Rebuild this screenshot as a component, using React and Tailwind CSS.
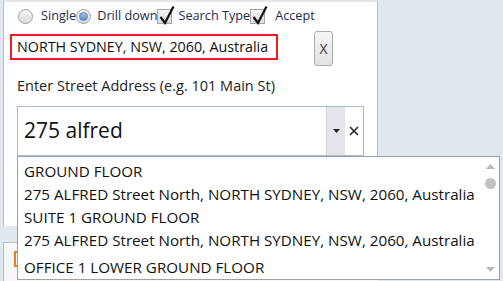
import React from "react";

const font = { fontFamily: '"Open Sans", "Noto Sans", sans-serif' };

function Radio({ checked }) {
  return (
    <span className="w-[15px] h-[15px] rounded-full border border-[#9aa0a8] bg-gradient-to-b from-[#f4f4f4] to-[#dcdcdc] flex items-center justify-center shrink-0">
      {checked && <span className="w-[9px] h-[9px] rounded-full bg-gradient-to-b from-[#a9c4ec] to-[#5d87c9] border border-[#5a7fbf]" />}
    </span>
  );
}

function Check() {
  return (
    <span className="relative w-[15px] h-[15px] border border-[#a6a6a6] bg-gradient-to-b from-[#f2f2f2] to-[#dedede] shrink-0">
      <svg className="absolute left-[1px] top-[-5px]" width="16" height="20" viewBox="0 0 16 20">
        <path d="M1.5 12 L6 18 L14.5 1.5" fill="none" stroke="#111" strokeWidth="2.2" />
      </svg>
    </span>
  );
}

export default function App() {
  return (
    <div className="w-[503px] h-[281px] relative overflow-hidden bg-[#e0e7ef] flex text-[#111]" style={font}>
      <div className="w-[378px] shrink-0 pl-[3px] flex flex-col">
        <div className="h-[226px] bg-white border-l border-r border-[#b9bec6] border-t-2 border-t-[#e3e6ea] relative">
          {/* options row */}
          <div className="flex items-center h-[28px] pl-[14px] text-[12.7px] text-[#1e2b50]">
            <Radio />
            <span className="ml-[8px]">Single</span>
            <Radio checked />
            <span className="ml-[6px]">Drill down</span>
            <Check />
            <span className="ml-[6px]">Search Type</span>
            <Check />
            <span className="ml-[10px]">Accept</span>
          </div>
          <div className="flex items-start mt-[1px]">
            <div className="ml-[6px] mt-[3px] w-[268px] h-[26px] border-2 border-[#ec1c24] flex items-center pl-[5px] text-[14.3px] whitespace-nowrap overflow-hidden">
              NORTH SYDNEY, NSW, 2060, Australia
            </div>
            <button className="ml-[36px] w-[19px] h-[35px] rounded-[3px] border border-[#a9adb3] bg-gradient-to-b from-[#f5f5f5] to-[#e2e2e2] text-[14px] text-[#333] flex items-center justify-center">
              X
            </button>
          </div>
          <div className="pl-[13px] mt-[11px] text-[14.5px] leading-[18px] text-[#222]">
            Enter Street Address (e.g. 101 Main St)
          </div>
          <div className="ml-[13px] mt-[11px] w-[347px] h-[50px] border border-[#a9b9da] flex">
            <div className="flex-1 flex items-center pl-[6px] text-[21px] text-[#111]">275 alfred</div>
            <div className="w-[19px] bg-[#e4e5e9] border-l border-[#d0d2d8] flex items-center justify-center">
              <svg width="7" height="4" viewBox="0 0 7 4"><path d="M0 0 H7 L3.5 4 Z" fill="#222" /></svg>
            </div>
            <div className="w-[18px] flex items-center justify-center">
              <svg width="10" height="10" viewBox="0 0 10 10"><path d="M1 1 L9 9 M9 1 L1 9" stroke="#222" strokeWidth="1.6" /></svg>
            </div>
          </div>
        </div>
        <div className="mt-[16px] flex-1 bg-[#f7f7f7] border-l border-t border-[#b9bec6] pl-[10px] pt-[8px]">
          <div className="w-[6px] h-[16px] border-l-2 border-y-2 border-[#d9822b]" />
        </div>
      </div>

      {/* autocomplete popup */}
      <div className="absolute left-[17px] top-[156px] w-[483px] h-[124px] bg-white border border-[#a0a0a0] flex text-[15.2px] text-[#111]">
        <div className="flex-1 pl-[6px] pt-[3px] leading-[23px] whitespace-nowrap">
          <div>GROUND FLOOR</div>
          <div>275 ALFRED Street North, NORTH SYDNEY, NSW, 2060, Australia</div>
          <div>SUITE 1 GROUND FLOOR</div>
          <div>275 ALFRED Street North, NORTH SYDNEY, NSW, 2060, Australia</div>
          <div className="mt-[4px]">OFFICE 1 LOWER GROUND FLOOR</div>
        </div>
        <div className="w-[17px] flex flex-col items-center pt-[7px] pb-[7px]">
          <svg width="9" height="5" viewBox="0 0 9 5"><path d="M0 5 H9 L4.5 0 Z" fill="#b8b8b8" /></svg>
          <div className="mt-[9px] w-[11px] h-[11px] rounded-full bg-[#c2c2c2]" />
          <div className="flex-1" />
          <svg width="9" height="5" viewBox="0 0 9 5"><path d="M0 0 H9 L4.5 5 Z" fill="#b8b8b8" /></svg>
        </div>
      </div>
    </div>
  );
}
